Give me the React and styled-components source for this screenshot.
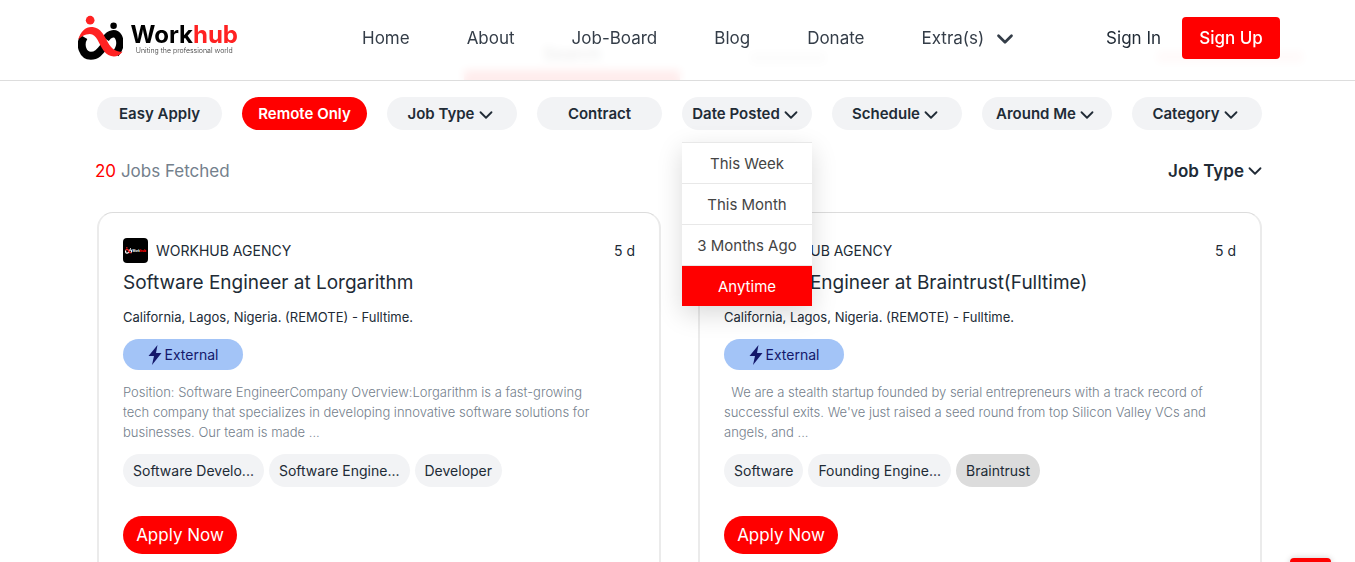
import { useState } from 'react';
import styled, { createGlobalStyle, css } from 'styled-components';
import { FiChevronDown } from 'react-icons/fi';

const navLinks = ['Home', 'About', 'Job-Board', 'Blog', 'Donate'];

const dateOptions = ['This Week', 'This Month', '3 Months Ago', 'Anytime'];

const filters = [
  { name: 'Easy Apply' },
  { name: 'Remote Only' },
  { name: 'Job Type', menu: true },
  { name: 'Contract' },
  { name: 'Date Posted', menu: true, options: dateOptions },
  { name: 'Schedule', menu: true },
  { name: 'Around Me', menu: true },
  { name: 'Category', menu: true },
];

const jobs = [
  {
    id: 1,
    company: 'WORKHUB AGENCY',
    age: '5 d',
    title: 'Software Engineer at Lorgarithm',
    location: 'California, Lagos, Nigeria. (REMOTE) - Fulltime.',
    text: 'Position: Software EngineerCompany Overview:Lorgarithm is a fast-growing tech company that specializes in developing innovative software solutions for businesses. Our team is made ...',
    tags: ['Software Develo...', 'Software Engine...', 'Developer'],
  },
  {
    id: 2,
    company: 'WORKHUB AGENCY',
    age: '5 d',
    title: 'Software Engineer at Braintrust(Fulltime)',
    location: 'California, Lagos, Nigeria. (REMOTE) - Fulltime.',
    text: "\u00a0\u00a0We are a stealth startup founded by serial entrepreneurs with a track record of successful exits. We've just raised a seed round from top Silicon Valley VCs and angels, and ...",
    tags: ['Software', 'Founding Engine...', 'Braintrust'],
    hovered: 'Braintrust',
  },
];

const Mark = ({ size, dark }) => {
  const ink = dark ? '#fff' : '#000';
  return (
    <svg width={size} height={size} viewBox="0 0 46 46" fill="none" aria-hidden="true">
      <circle cx="12.3" cy="5" r="4.4" fill="#ff2222" />
      <circle cx="36" cy="10.5" r="3.3" fill={ink} />
      <path d="M6 22C1 30 5 41 13 41C19 41 22 37 26 32" stroke={ink} strokeWidth="8" />
      <path d="M28 24C32 18 38 17 41 22C44 28 42 34 38 39" stroke={ink} strokeWidth="7.5" />
      <path
        d="M0 25C3 15 9 11 15 12C23 13 26 20 30 27C34 34 38 37 45 37C40 44 31 43 26 36C21 29 19 19 12 19C7 19 3 22 0 25Z"
        fill="#ff2222"
      />
    </svg>
  );
};

const Bolt = () => (
  <svg width="14" height="20" viewBox="0 0 14 20" aria-hidden="true">
    <path d="M9.5 0L0.5 11H6L4 20L13.5 8H8Z" fill="#14186b" />
  </svg>
);

const JobCard = ({ job }) => (
  <Card>
    <CardTop>
      <Avatar><Mark size={7} dark /><AvatarName>Work<b>hub</b></AvatarName></Avatar>
      <span>{job.company}</span>
      <Age>{job.age}</Age>
    </CardTop>
    <JobTitle>{job.title}</JobTitle>
    <Location>{job.location}</Location>
    <External><Bolt />External</External>
    <Description>{job.text}</Description>
    <Tags>
      {job.tags.map((tag) => (
        <Tag key={tag} $hovered={tag === job.hovered}>{tag}</Tag>
      ))}
    </Tags>
    <ApplyButton type="button">Apply Now</ApplyButton>
  </Card>
);

const App = () => {
  const [open, setOpen] = useState('Date Posted');
  const [active, setActive] = useState('Remote Only');
  const [date, setDate] = useState('Anytime');

  const onFilter = (filter) => {
    if (filter.menu) setOpen(open === filter.name ? '' : filter.name);
    else setActive(filter.name);
  };

  return (
    <>
      <GlobalStyle />
      <Header>
        <Logo href="#">
          <Mark size={46} />
          <LogoText>
            <LogoName>Work<b>hub</b></LogoName>
            <Tagline>Uniting the professional world</Tagline>
          </LogoText>
        </Logo>
        <Nav>
          {navLinks.map((link) => <NavLink href="#" key={link}>{link}</NavLink>)}
          <ExtraButton type="button">Extra(s) <Chevron size={26} strokeWidth={2.5} /></ExtraButton>
        </Nav>
        <Actions>
          <SignIn href="#">Sign In</SignIn>
          <SignUp type="button">Sign Up</SignUp>
        </Actions>
      </Header>

      <TabStrip aria-hidden="true">
        <Tab $selected>Search</Tab>
        <Tab><Smudge $color="#ccc" /></Tab>
        <StripEnd><Smudge $color="#ffb0b0" $wide /></StripEnd>
      </TabStrip>

      <Main>
        <Filters>
          {filters.map((filter) => (
            <FilterItem key={filter.name} $menu={filter.menu}>
              <FilterButton type="button" $active={active === filter.name} onClick={() => onFilter(filter)}>
                {filter.name}
                {filter.menu && <Chevron size={22} />}
              </FilterButton>
              {filter.options && open === filter.name && (
                <Menu>
                  {filter.options.map((option) => (
                    <MenuItem type="button" key={option} $active={option === date} onClick={() => setDate(option)}>
                      {option}
                    </MenuItem>
                  ))}
                </Menu>
              )}
            </FilterItem>
          ))}
        </Filters>

        <ResultBar>
          <Count><span>20</span> Jobs Fetched</Count>
          <SortButton type="button">Job Type<FiChevronDown size={22} /></SortButton>
        </ResultBar>

        <CardGrid>
          {jobs.map((job) => <JobCard job={job} key={job.id} />)}
        </CardGrid>
      </Main>

      <TopButton type="button" aria-label="Back to top" />
    </>
  );
};

export default App;

const GlobalStyle = createGlobalStyle`
  * {
    box-sizing: border-box;
  }

  html {
    scrollbar-width: none;
  }

  body {
    margin: 0;
    background: #fff;
    color: #212b36;
    font-family: Inter, "Open Sans", sans-serif;
  }

  button {
    border: none;
    padding: 0;
    background: none;
    color: inherit;
    font: inherit;
    cursor: pointer;
  }

  a {
    color: inherit;
    text-decoration: none;
  }
`;

const Header = styled.header`
  position: fixed;
  top: 0;
  left: 0;
  right: 0;
  z-index: 10;
  display: flex;
  align-items: center;
  height: 81px;
  padding: 0 75px 5px 78px;
  border-bottom: 1px solid #ddd;
  background: rgba(255, 255, 255, 0.93);
  backdrop-filter: blur(4px);
`;

const Logo = styled.a`
  display: flex;
  align-items: center;
  gap: 7px;
  width: 160px;
`;

const LogoText = styled.span`
  display: flex;
  flex-direction: column;
  align-items: center;
  padding-top: 3px;
`;

const LogoName = styled.span`
  color: #000;
  font-size: 24px;
  font-weight: 700;
  line-height: 24px;

  b {
    color: #ff2222;
    font-weight: 700;
  }
`;

const Tagline = styled.span`
  color: #333;
  font-size: 7px;
  font-weight: 300;
  line-height: 8px;
  white-space: nowrap;
`;

const Chevron = styled(FiChevronDown)`
  margin-top: 3px;
`;

const Nav = styled.nav`
  display: flex;
  align-items: center;
  gap: 57px;
  margin-left: 124px;
  color: #343d48;
  font-size: 17px;
  font-weight: 400;
`;

const NavLink = styled.a`
  white-space: nowrap;
`;

const ExtraButton = styled.button`
  display: flex;
  align-items: center;
  gap: 8px;
  height: 26px;
`;

const Actions = styled.div`
  display: flex;
  align-items: center;
  gap: 21px;
  margin-left: auto;
  font-size: 17px;
`;

const SignIn = styled.a`
  white-space: nowrap;
`;

const SignUp = styled.button`
  width: 98px;
  height: 42px;
  border-radius: 4px;
  background: #ff0000;
  color: #fff;
  font-weight: 500;
`;

const TabStrip = styled.div`
  display: flex;
  height: 81px;
  padding-left: 464px;
`;

const Tab = styled.div`
  display: flex;
  align-items: flex-end;
  justify-content: center;
  width: 216px;
  padding-bottom: 6px;
  border-bottom: 11px solid ${(props) => (props.$selected ? '#ff0000' : 'transparent')};
  color: #000;
  font-size: 17px;
  font-weight: 600;
`;

const StripEnd = styled.div`
  display: flex;
  align-items: flex-end;
  margin-left: auto;
  padding: 0 52px 18px 0;
`;

const Smudge = styled.span`
  width: ${(props) => (props.$wide ? '146px' : '76px')};
  height: 12px;
  background: ${(props) => props.$color};
`;

const Main = styled.main`
  padding: 16px 93px 40px 97px;
`;

const Filters = styled.div`
  display: flex;
  gap: 20px;
`;

const FilterItem = styled.div`
  position: relative;
  flex: ${(props) => (props.$menu ? '130 1 0' : '125 1 0')};
`;

const FilterButton = styled.button`
  display: flex;
  align-items: center;
  justify-content: center;
  width: 100%;
  height: 33px;
  border-radius: 17px;
  background: ${(props) => (props.$active ? '#ff0000' : '#f2f3f5')};
  color: ${(props) => (props.$active ? '#fff' : '#212b36')};
  font-size: 15px;
  font-weight: 600;
  white-space: nowrap;
`;

const Menu = styled.div`
  position: absolute;
  top: 45px;
  left: 0;
  right: 0;
  z-index: 5;
  background: #fff;
  box-shadow: 0 8px 24px rgba(0, 0, 0, 0.15);
`;

const MenuItem = styled.button`
  display: block;
  width: 100%;
  height: 41px;
  border-top: 1px solid #e8e8e8;
  color: #444;
  font-size: 15px;

  ${(props) => props.$active && css`
    background: #ff0000;
    color: #fff;
  `}
`;

const ResultBar = styled.div`
  display: flex;
  align-items: center;
  justify-content: space-between;
  height: 82px;
  margin: 0 -4px 0 -2px;
`;

const Count = styled.span`
  color: #74808c;
  font-size: 17px;

  span {
    color: #ff0000;
  }
`;

const SortButton = styled.button`
  display: flex;
  align-items: center;
  font-size: 17px;
  font-weight: 600;
`;

const CardGrid = styled.div`
  display: grid;
  grid-template-columns: 1fr 1fr;
  gap: 37px;
`;

const Card = styled.article`
  padding: 25px 24px 40px;
  border: 2px solid #ebebeb;
  border-top: 1px solid #dcdcdc;
  border-radius: 16px;
`;

const CardTop = styled.div`
  display: flex;
  align-items: center;
  gap: 8px;
  height: 25px;
  font-size: 14px;
`;

const Avatar = styled.span`
  display: flex;
  align-items: center;
  justify-content: center;
  width: 25px;
  height: 25px;
  border-radius: 4px;
  background: #000;
`;

const AvatarName = styled.span`
  color: #fff;
  font-size: 3px;
  font-weight: 700;

  b {
    color: #ff0000;
  }
`;

const Age = styled.span`
  margin-left: auto;
`;

const JobTitle = styled.h2`
  margin: 8px 0 0;
  font-size: 19px;
  font-weight: 400;
  line-height: 24px;
`;

const Location = styled.p`
  margin: 12px 0;
  font-size: 13px;
  line-height: 20px;
`;

const External = styled.div`
  display: flex;
  align-items: center;
  justify-content: center;
  gap: 3px;
  width: 120px;
  height: 31px;
  border-radius: 16px;
  background: #a3c4f7;
  color: #14186b;
  font-size: 14px;
`;

const Description = styled.p`
  margin: 12px 0;
  padding-right: 28px;
  color: #74808c;
  font-size: 13px;
  font-weight: 300;
  line-height: 20px;
`;

const Tags = styled.div`
  display: flex;
  gap: 5px;
`;

const Tag = styled.span`
  padding: 0 10px;
  border-radius: 17px;
  background: ${(props) => (props.$hovered ? '#dcdcdc' : '#f2f3f5')};
  font-size: 14px;
  line-height: 33px;
`;

const ApplyButton = styled.button`
  width: 114px;
  height: 38px;
  margin-top: 29px;
  border-radius: 19px;
  background: #ff0000;
  color: #fff;
  font-size: 17px;
`;

const TopButton = styled.button`
  position: fixed;
  right: 24px;
  bottom: -36px;
  width: 41px;
  height: 40px;
  border-radius: 4px;
  background: #ff0000;
  box-shadow: 0 0 6px rgba(0, 0, 0, 0.2);
`;
